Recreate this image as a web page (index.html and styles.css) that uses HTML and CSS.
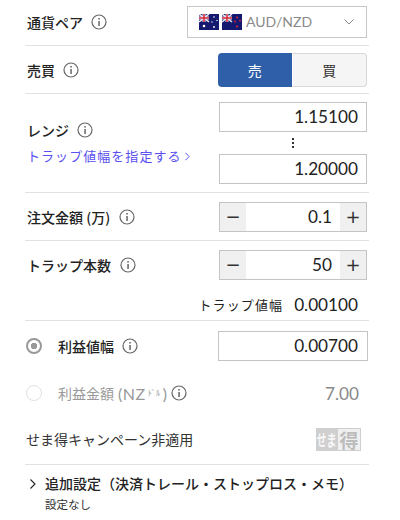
FILE: index.html
```html
<!DOCTYPE html>
<html lang="ja">
<head>
	<meta charset="UTF-8">
	<title>注文入力</title>
	<link rel="stylesheet" href="styles.css">
</head>
<body>
	<svg class="defs" width="0" height="0">
		<symbol id="info" viewBox="0 0 16 16">
			<circle cx="8" cy="8" r="7" fill="#fff" stroke="#666" stroke-width="1.2"/>
			<rect x="7.3" y="7" width="1.5" height="5" fill="#666"/>
			<rect x="7.3" y="4" width="1.5" height="1.6" fill="#666"/>
		</symbol>
	</svg>
	<div class="order">
		<div class="row row_pair">
			<div class="label">通貨ペア <svg class="info"><use href="#info"/></svg></div>
			<div class="select">
				<svg class="flag" viewBox="0 0 20 16">
					<rect width="20" height="16" fill="#14186e"/>
					<rect width="10" height="8" fill="#2a2a78"/>
					<path d="M0 0L10 8M10 0L0 8" stroke="#e8e8f0" stroke-width="1.6"/>
					<path d="M5 0V8M0 4H10" stroke="#e8e8f0" stroke-width="3"/>
					<path d="M5 0V8M0 4H10" stroke="#d8263a" stroke-width="1.5"/>
					<circle cx="5" cy="12" r="1.3" fill="#fff"/>
					<circle cx="15" cy="3" r=".8" fill="#fff"/>
					<circle cx="18" cy="6.5" r=".7" fill="#fff"/>
					<circle cx="13" cy="8" r=".7" fill="#fff"/>
					<circle cx="15" cy="13" r=".9" fill="#fff"/>
				</svg>
				<svg class="flag" viewBox="0 0 20 16">
					<rect width="20" height="16" fill="#14186e"/>
					<path d="M0 0L10 8M10 0L0 8" stroke="#e8e8f0" stroke-width="1.6"/>
					<path d="M5 0V8M0 4H10" stroke="#e8e8f0" stroke-width="3"/>
					<path d="M5 0V8M0 4H10" stroke="#d8263a" stroke-width="1.5"/>
					<circle cx="15" cy="3.5" r="1" fill="#d8263a"/>
					<circle cx="18" cy="6.5" r=".9" fill="#d8263a"/>
					<circle cx="13" cy="7.5" r=".9" fill="#d8263a"/>
					<circle cx="15" cy="12.5" r="1.1" fill="#d8263a"/>
				</svg>
				<span class="pair_name">AUD/NZD</span>
				<svg class="chevron" viewBox="0 0 10 6"><path d="M.5 .5L5 5L9.5 .5" fill="none" stroke="#888" stroke-width="1"/></svg>
			</div>
		</div>
		<div class="row row_side">
			<div class="label">売買 <svg class="info"><use href="#info"/></svg></div>
			<div class="toggle">
				<a class="sell">売</a>
				<a class="buy">買</a>
			</div>
		</div>
		<div class="row row_range">
			<div>
				<div class="label">レンジ <svg class="info"><use href="#info"/></svg></div>
				<a class="trap_link">トラップ値幅を指定する<svg class="link_arrow" viewBox="0 0 6 10"><path d="M.5 .5L5 5L.5 9.5" fill="none" stroke="#5a50f0" stroke-width="1.2"/></svg></a>
			</div>
			<div class="range_inputs">
				<div class="input">1.15100</div>
				<div class="dots"><i></i><i></i><i></i></div>
				<div class="input">1.20000</div>
			</div>
		</div>
		<div class="row row_step">
			<div class="label">注文金額 (万) <svg class="info"><use href="#info"/></svg></div>
			<div class="stepper"><a>−</a><span>0.1</span><a>+</a></div>
		</div>
		<div class="row_trap">
			<div class="row row_step no_line">
				<div class="label">トラップ本数 <svg class="info"><use href="#info"/></svg></div>
				<div class="stepper"><a>−</a><span>50</span><a>+</a></div>
			</div>
			<div class="trap_width"><span class="trap_name">トラップ値幅</span><span class="trap_val">0.00100</span></div>
		</div>
		<div class="profit">
			<div class="profit_row">
				<span class="radio on"></span>
				<div class="label">利益値幅 <svg class="info"><use href="#info"/></svg></div>
				<div class="input profit_input">0.00700</div>
			</div>
			<div class="profit_row off">
				<span class="radio"></span>
				<div class="label">利益金額<span class="unit">(NZ<small>ﾄﾞﾙ</small>)</span> <svg class="info"><use href="#info"/></svg></div>
				<div class="profit_val">7.00</div>
			</div>
		</div>
		<div class="campaign">
			<span>せま得キャンペーン非適用</span>
			<div class="badge"><b class="badge_left"><span>せま</span></b><b class="badge_right">得</b></div>
		</div>
		<div class="extra">
			<div class="extra_title"><svg class="arrow" viewBox="0 0 6 10"><path d="M.5 .5L5 5L.5 9.5" fill="none" stroke="#222" stroke-width="1.1"/></svg>追加設定（決済トレール・ストップロス・メモ）</div>
			<div class="extra_sub">設定なし</div>
		</div>
	</div>
</body>
</html>
```

FILE: styles.css
```css
*{
	margin:0;
	padding:0;
	box-sizing:border-box;
}
body{
	background:#fff;
	color:#222;
	font-family:"Noto Sans CJK JP","Noto Sans",sans-serif;
	font-size:14px;
}
.defs{
	position:absolute;
}
.order{
	width:344px;
	margin-left:25px;
}
.row{
	display:flex;
	justify-content:space-between;
	align-items:center;
	padding:0 2px;
	border-bottom:1px solid #e2e2e2;
}
.no_line{
	border-bottom:0;
}
.label{
	display:flex;
	align-items:center;
	font-weight:500;
	font-size:14px;
	line-height:20px;
	color:#222;
}
.info{
	width:16px;
	height:16px;
	margin-left:8px;
}
.row_pair{
	height:46px;
	padding-bottom:2px;
}
.select{
	display:flex;
	align-items:center;
	width:180px;
	height:32px;
	border:1px solid #c8c8c8;
	padding:0 11px;
}
.flag{
	width:20px;
	height:16px;
	margin-right:3px;
}
.pair_name{
	color:#8a8a8a;
	font-family:"Lato",sans-serif;
	font-size:14px;
	margin-left:1px;
}
.chevron{
	width:10px;
	height:6px;
	margin-left:auto;
	margin-right:1px;
}
.row_side{
	height:48px;
}
.toggle{
	display:flex;
	width:149px;
	height:34px;
}
.toggle a{
	flex:1;
	text-align:center;
	line-height:34px;
	font-size:14px;
}
.sell{
	background:#2f5fa8;
	color:#fff;
	border-radius:4px 0 0 4px;
}
.buy{
	background:#f5f5f5;
	color:#333;
	border:1px solid #d8d8d8;
	border-left:0;
	margin-left:1px;
	line-height:32px !important;
	border-radius:0 4px 4px 0;
}
.row_range{
	height:99px;
}
.trap_link{
	display:flex;
	align-items:center;
	margin-top:6px;
	color:#5a50f0;
	font-size:13px;
	letter-spacing:1.05px;
	line-height:20px;
}
.link_arrow{
	width:5px;
	height:9px;
	margin-left:3px;
}
.range_inputs{
	width:148px;
}
.input{
	height:30px;
	border:1px solid #c4c4c4;
	text-align:right;
	padding-right:8px;
	font-family:"Lato",sans-serif;
	font-size:17.2px;
	line-height:28px;
	color:#222;
}
.dots{
	display:flex;
	flex-direction:column;
	align-items:center;
	justify-content:center;
	gap:2px;
	height:22px;
}
.dots i{
	width:2px;
	height:2px;
	background:#333;
}
.row_step{
	height:48px;
}
.row_step .info{
	margin-left:9px;
}
.stepper{
	display:flex;
	width:148px;
	height:30px;
	border:1px solid #c4c4c4;
}
.stepper a{
	width:26px;
	background:#f0f0f0;
	text-align:center;
	font-family:"DejaVu Sans",sans-serif;
	font-size:18px;
	line-height:27px;
	color:#333;
}
.stepper span{
	flex:1;
	text-align:right;
	padding-right:8px;
	font-family:"Lato",sans-serif;
	font-size:17.2px;
	line-height:28px;
}
.row_trap{
	height:80px;
	border-bottom:1px solid #e2e2e2;
}
.trap_width{
	display:flex;
	justify-content:flex-end;
	align-items:center;
	height:24px;
	margin-top:3px;
	padding-right:11px;
}
.trap_name{
	font-size:13px;
	letter-spacing:1.1px;
	margin-right:11px;
}
.trap_val{
	font-family:"Lato",sans-serif;
	font-size:17.2px;
}
.profit_row{
	display:flex;
	align-items:center;
	height:30px;
	margin-top:10px;
}
.profit_row.off{
	height:32px;
	margin-top:16px;
}
.radio{
	width:16px;
	height:16px;
	margin-left:1px;
	margin-right:16px;
	border:1.5px solid #e0e0e0;
	border-radius:50%;
}
.radio.on{
	border:2px solid #999;
	background:radial-gradient(circle,#999 0 3px,#fff 3.5px);
}
.profit_input{
	width:150px;
	margin-left:auto;
	margin-right:1px;
}
.profit_input.input{
	padding-right:9px;
}
.off .label{
	color:#999;
	font-weight:400;
}
.unit{
	margin-left:4px;
	font-family:"Lato",sans-serif;
	font-size:16px;
	letter-spacing:.5px;
}
.off small{
	font-family:"Noto Sans CJK JP",sans-serif;
	font-size:8px;
	vertical-align:4px;
	margin:0 2px;
}
.off .info{
	margin-left:4px;
}
.profit_val{
	margin-left:auto;
	margin-right:10px;
	font-family:"Lato",sans-serif;
	font-size:17.2px;
	color:#888;
}
.campaign{
	display:flex;
	justify-content:space-between;
	align-items:center;
	height:48px;
	margin-top:8px;
	padding:0 8px 3px 1px;
	border-bottom:1px solid #e2e2e2;
	font-size:14px;
	color:#333;
}
.badge{
	display:flex;
	width:45px;
	height:23px;
	line-height:21px;
	text-align:center;
}
.badge_left{
	width:21px;
	background:#cfcfcf;
	color:#f6f6f6;
	font-size:10px;
	white-space:nowrap;
}
.badge_left span{
	display:inline-block;
	transform:scaleY(1.6);
}
.badge_right{
	flex:1;
	background:#f0f0f0;
	border:1px solid #cfcfcf;
	color:#bdbdbd;
	font-size:19px;
}
.extra{
	padding:8px 0 0 5px;
}
.extra_title{
	display:flex;
	align-items:center;
	font-weight:500;
	font-size:14px;
	line-height:21px;
}
.arrow{
	width:6px;
	height:10px;
	margin-right:9px;
}
.extra_sub{
	padding-left:15px;
	font-size:11.5px;
	line-height:21px;
	color:#333;
}
```
